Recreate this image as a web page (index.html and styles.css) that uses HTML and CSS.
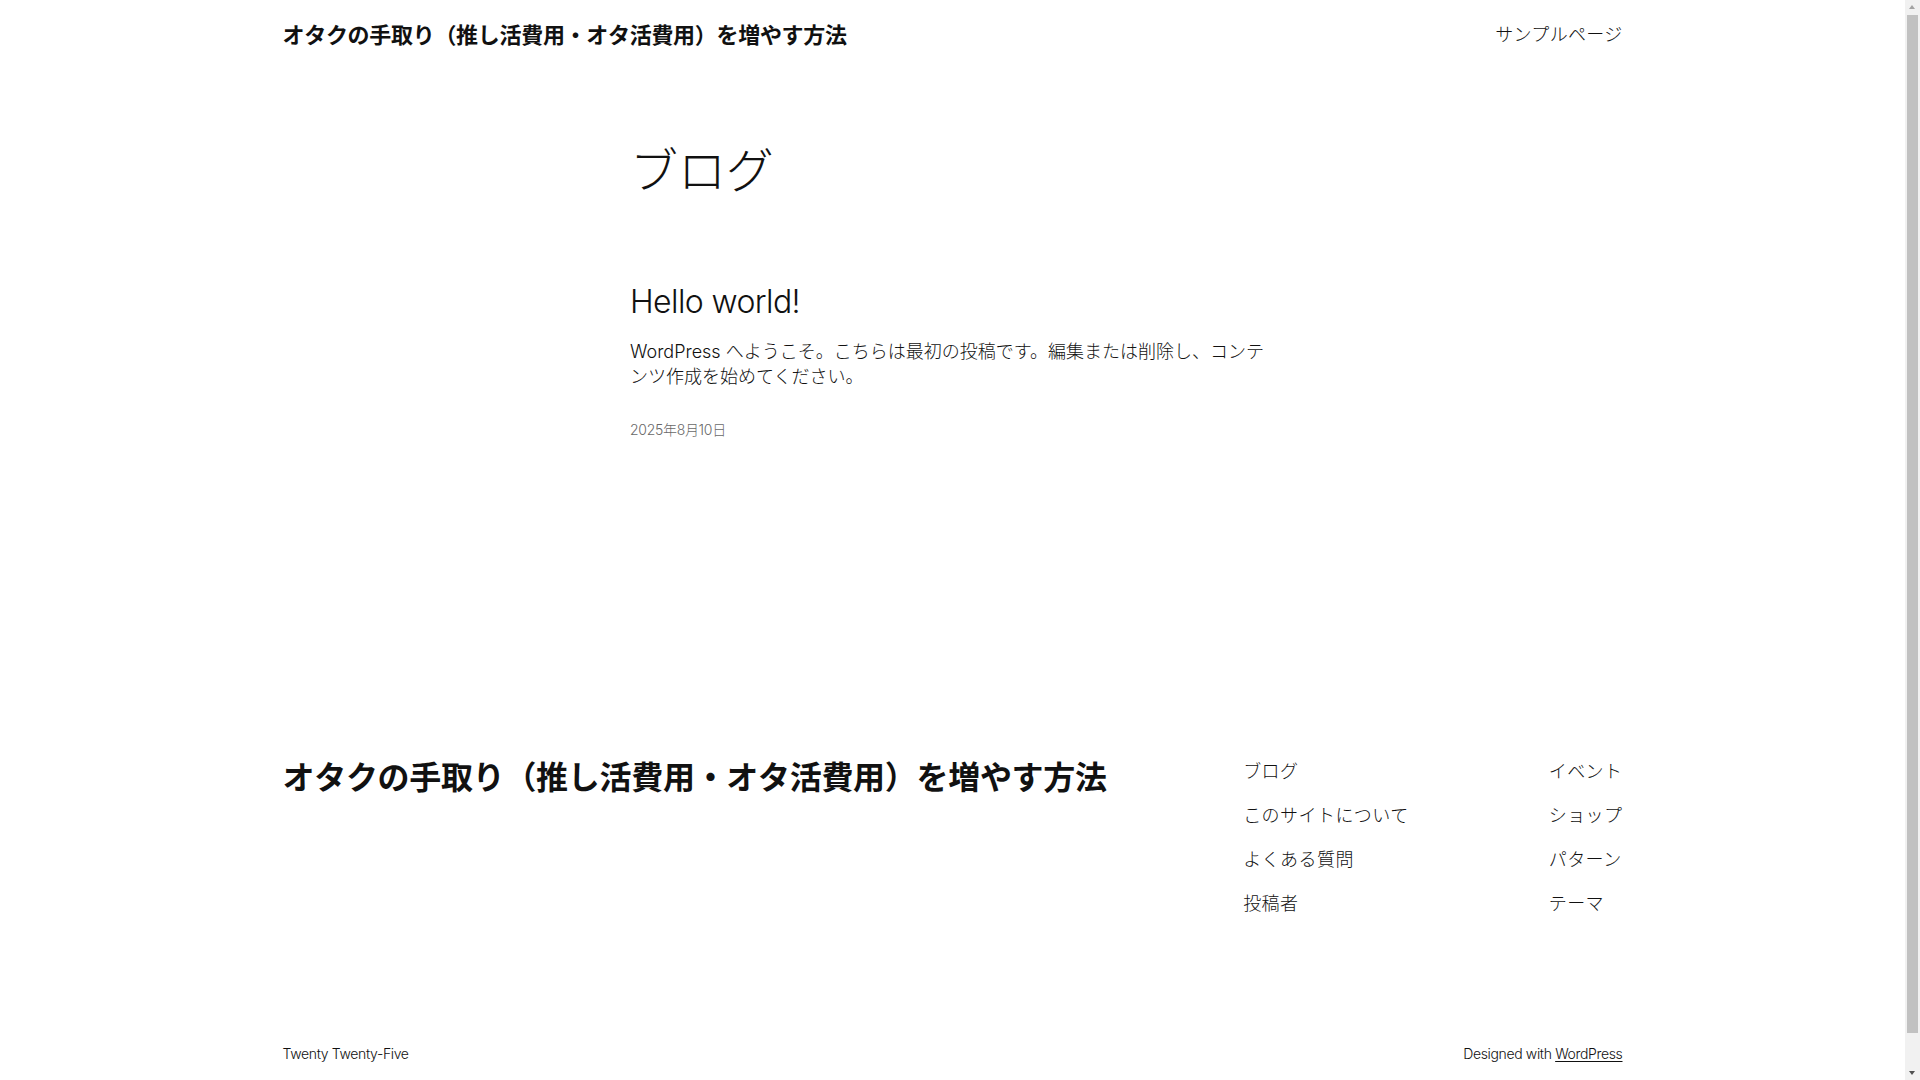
FILE: index.html
```html
<!DOCTYPE html>
<html lang="ja">
<head>
<meta charset="utf-8">
<title>ブログ – オタクの手取り（推し活費用・オタ活費用）を増やす方法</title>
<link rel="stylesheet" href="styles.css">
</head>
<body>
<div class="page">
<header class="site-header">
  <div class="wide header-row">
    <a class="site-title" href="#">オタクの手取り（推し活費用・オタ活費用）を増やす方法</a>
    <nav class="header-nav"><a href="#">サンプルページ</a></nav>
  </div>
</header>

<main class="site-main">
  <div class="content">
    <h1 class="page-title">ブログ</h1>
    <article class="post">
      <h2 class="post-title"><a href="#">Hello world!</a></h2>
      <p class="post-excerpt">WordPress へようこそ。こちらは最初の投稿です。編集または削除し、コンテンツ作成を始めてください。</p>
      <div class="post-date">2025年8月10日</div>
    </article>
  </div>
</main>

<footer class="site-footer">
  <div class="wide footer-top">
    <a class="footer-title" href="#">オタクの手取り（推し活費用・オタ活費用）を増やす方法</a>
    <div class="footer-navs">
      <ul class="footer-nav">
        <li><a href="#">ブログ</a></li>
        <li><a href="#">このサイトについて</a></li>
        <li><a href="#">よくある質問</a></li>
        <li><a href="#">投稿者</a></li>
      </ul>
      <ul class="footer-nav">
        <li><a href="#">イベント</a></li>
        <li><a href="#">ショップ</a></li>
        <li><a href="#">パターン</a></li>
        <li><a href="#">テーマ</a></li>
      </ul>
    </div>
  </div>
  <div class="wide footer-bottom">
    <span>Twenty Twenty-Five</span>
    <span>Designed with <a class="ul" href="#">WordPress</a></span>
  </div>
</footer>
</div>

<div class="scrollbar" aria-hidden="true">
  <div class="sb-arrow sb-up"></div>
  <div class="sb-thumb"></div>
  <div class="sb-arrow sb-down"></div>
</div>
</body>
</html>
```

FILE: styles.css
```css
html {
  overflow-y: scroll;
}
html, body {
  margin: 0;
  padding: 0;
  background: #ffffff;
}
body {
  font-family: Inter, "Noto Sans CJK JP", sans-serif;
  font-weight: 300;
  color: #111111;
  letter-spacing: -0.1px;
  line-height: 1.4;
  font-size: 18px;
}
.page {
  margin-right: 15px;
}
a {
  color: inherit;
  text-decoration: none;
}
.wide {
  max-width: 1340px;
  margin: 0 auto;
}
.content {
  max-width: 645px;
  margin: 0 auto;
}

/* header */
.site-header {
  padding: 18px 0 19px;
}
.header-row {
  display: flex;
  justify-content: space-between;
  align-items: center;
}
.site-title {
  font-family: "Noto Sans CJK JP", sans-serif;
  font-weight: 700;
  font-size: 22px;
  line-height: 1.4;
  letter-spacing: -0.3px;
}
.header-nav {
  font-family: "Noto Sans CJK JP", sans-serif;
  font-weight: 300;
  font-size: 18px;
  letter-spacing: 0.3px;
}

/* main */
.site-main {
  padding-top: 72px;
  min-height: 616px;
}
.page-title {
  margin: 0;
  font-family: "Noto Sans CJK JP", sans-serif;
  font-weight: 300;
  font-size: 48px;
  line-height: 1.125;
  letter-spacing: -0.1px;
}
.post {
  margin-top: 90px;
}
.post-title {
  margin: 0;
  font-weight: 300;
  font-size: 32px;
  line-height: 1.125;
  letter-spacing: -0.6px;
}
.post-excerpt {
  margin: 19px 0 0;
  font-size: 18px;
  line-height: 1.4;
  letter-spacing: 0;
}
.post-date {
  margin-top: 31px;
  font-size: 14px;
  line-height: 1.4;
  color: #686868;
  letter-spacing: -0.3px;
}

/* footer */
.site-footer {
  padding-bottom: 52px;
}
.footer-top {
  display: flex;
  justify-content: space-between;
  align-items: flex-start;
}
.footer-title {
  font-family: "Noto Sans CJK JP", sans-serif;
  font-weight: 700;
  font-size: 32px;
  line-height: 1.2;
  letter-spacing: -0.3px;
}
.footer-navs {
  display: flex;
  gap: 140px;
  padding-top: 2px;
}
.footer-nav {
  list-style: none;
  margin: 0;
  padding: 0;
  display: flex;
  flex-direction: column;
  gap: 18.8px;
  font-family: "Noto Sans CJK JP", sans-serif;
  font-weight: 300;
  font-size: 18px;
  line-height: 1.4;
  letter-spacing: 0.45px;
}
.footer-bottom {
  display: flex;
  justify-content: space-between;
  align-items: center;
  margin-top: 129px;
  font-size: 14px;
  line-height: 1.4;
  letter-spacing: -0.35px;
}
.ul {
  text-decoration: underline;
  text-underline-offset: 2px;
  text-decoration-thickness: 1px;
}

/* emulated browser scrollbar (overlay at right edge of viewport) */
.scrollbar {
  position: fixed;
  top: 0;
  right: 0;
  width: 15px;
  height: 100vh;
  background: #f1f1f1;
  display: flex;
  flex-direction: column;
  align-items: center;
}
.sb-arrow {
  height: 15px;
  width: 15px;
  flex: none;
  position: relative;
}
.sb-arrow::after {
  content: "";
  position: absolute;
  left: 4px;
  width: 0;
  height: 0;
  border-left: 3.5px solid transparent;
  border-right: 3.5px solid transparent;
}
.sb-up::after {
  top: 5px;
  border-bottom: 4px solid #a3a3a3;
}
.sb-down::after {
  top: 6px;
  border-top: 4px solid #505050;
}
.sb-thumb {
  flex: none;
  width: 11px;
  height: 1018px;
  background: #c1c1c1;
  margin-bottom: auto;
}
```
